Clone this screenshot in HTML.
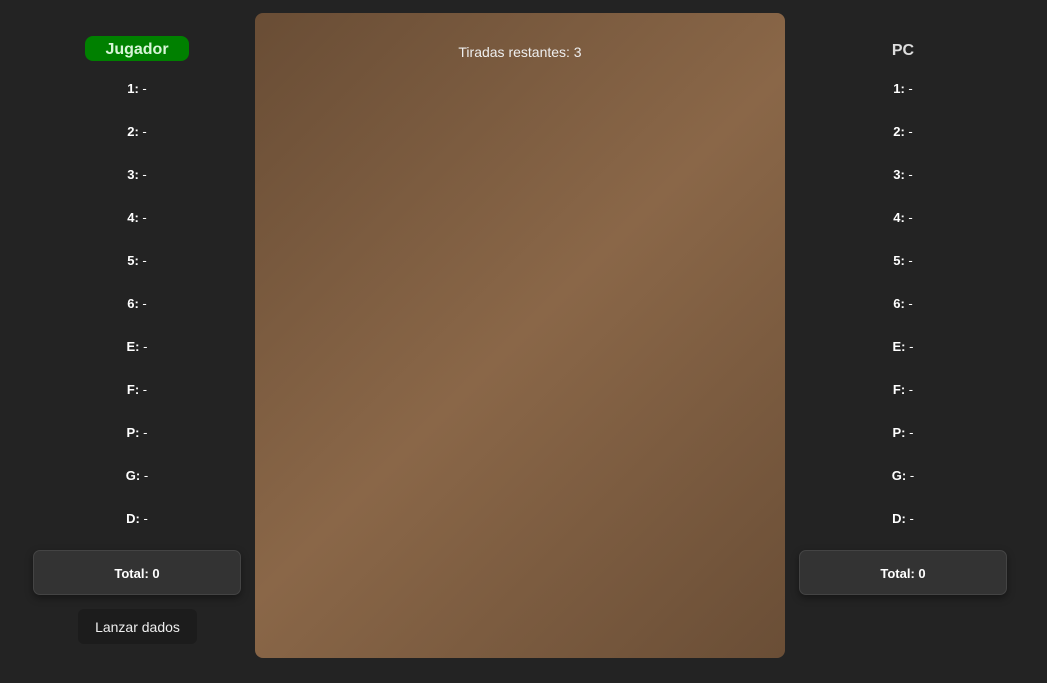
<!DOCTYPE html>
<html><head><style>
body{margin:0;width:1047px;height:683px;background:#232323;font-family:"Liberation Sans","DejaVu Sans",sans-serif;color:#fff;position:relative;overflow:hidden}
.board{position:absolute;left:255px;top:13px;width:530px;height:645px;border-radius:8px;background:linear-gradient(135deg,#694d35 0%,#8a6748 50%,#6a4e36 100%)}
.tir{position:absolute;top:31px;left:0;width:100%;text-align:center;font-size:14px;color:#eee}
.row{position:absolute;width:120px;text-align:center;font-size:13px;line-height:16px}
.row b{font-weight:bold}
.pill{position:absolute;left:85px;top:36px;width:104px;height:25px;border-radius:8px;background:#008000;color:#d8f5d8;font-weight:bold;font-size:16px;text-align:center;line-height:27px}
.pc{position:absolute;left:843px;width:120px;top:42px;text-align:center;font-weight:bold;font-size:16px;color:#ddd}
.tot{position:absolute;top:550px;width:206px;height:43px;border:1px solid #444;border-radius:7px;background:#333;text-align:center;line-height:45px;font-weight:bold;font-size:13px;box-shadow:0 3px 8px rgba(0,0,0,.4)}
.btn{position:absolute;left:78px;top:609px;width:119px;height:35px;border-radius:6px;background:#1c1c1c;text-align:center;line-height:36px;font-size:14px;color:#eee}
</style></head><body>
<div class="pill">Jugador</div>
<div class="pc">PC</div>
<div class="board"><div class="tir">Tiradas restantes: 3</div></div>
<div class="row" style="left:77px;top:81px"><b>1:</b> -</div>
<div class="row" style="left:77px;top:124px"><b>2:</b> -</div>
<div class="row" style="left:77px;top:167px"><b>3:</b> -</div>
<div class="row" style="left:77px;top:210px"><b>4:</b> -</div>
<div class="row" style="left:77px;top:253px"><b>5:</b> -</div>
<div class="row" style="left:77px;top:296px"><b>6:</b> -</div>
<div class="row" style="left:77px;top:339px"><b>E:</b> -</div>
<div class="row" style="left:77px;top:382px"><b>F:</b> -</div>
<div class="row" style="left:77px;top:425px"><b>P:</b> -</div>
<div class="row" style="left:77px;top:468px"><b>G:</b> -</div>
<div class="row" style="left:77px;top:511px"><b>D:</b> -</div>
<div class="row" style="left:843px;top:81px"><b>1:</b> -</div>
<div class="row" style="left:843px;top:124px"><b>2:</b> -</div>
<div class="row" style="left:843px;top:167px"><b>3:</b> -</div>
<div class="row" style="left:843px;top:210px"><b>4:</b> -</div>
<div class="row" style="left:843px;top:253px"><b>5:</b> -</div>
<div class="row" style="left:843px;top:296px"><b>6:</b> -</div>
<div class="row" style="left:843px;top:339px"><b>E:</b> -</div>
<div class="row" style="left:843px;top:382px"><b>F:</b> -</div>
<div class="row" style="left:843px;top:425px"><b>P:</b> -</div>
<div class="row" style="left:843px;top:468px"><b>G:</b> -</div>
<div class="row" style="left:843px;top:511px"><b>D:</b> -</div>
<div class="tot" style="left:33px">Total: 0</div>
<div class="tot" style="left:799px">Total: 0</div>
<div class="btn">Lanzar dados</div>
</body></html>
